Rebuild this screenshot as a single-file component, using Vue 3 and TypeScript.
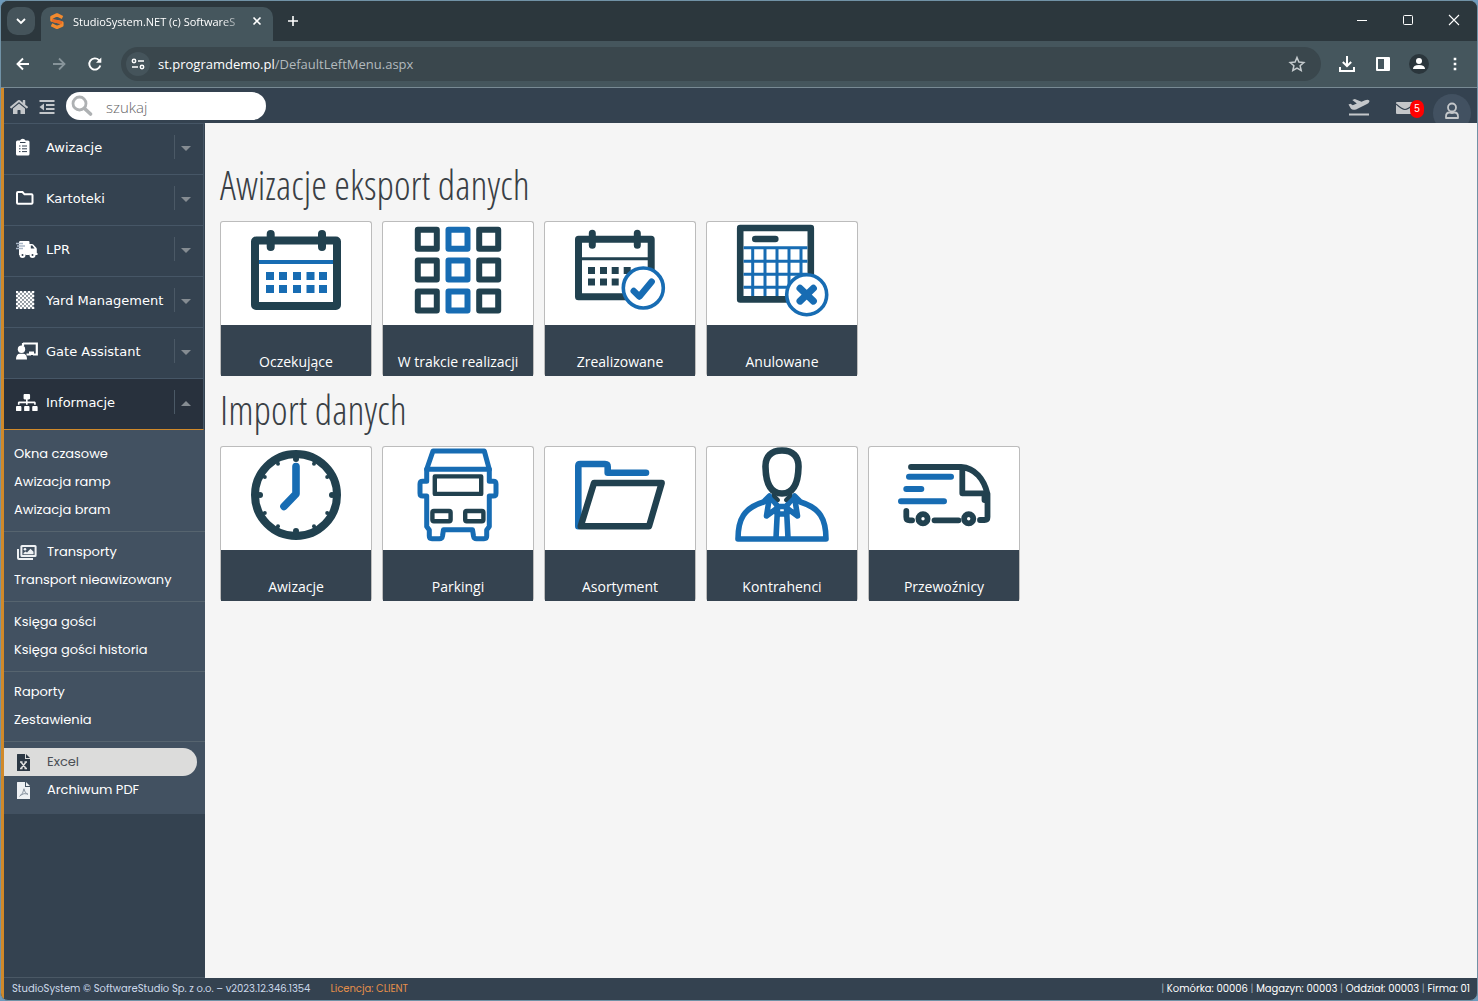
<script setup lang="ts">
import { ref } from 'vue'

interface Tile {
  label: string
  art: string
}
interface Section {
  title: string
  tiles: Tile[]
}
interface NavItem {
  label: string
  icon: string
}
interface SubItem {
  label: string
  icon?: string
  selected?: boolean
}

const dark = '#21414f'
const blue = '#176cb3'

const rects = (xs: number[], ys: number[], size: number, attrs: string): string =>
  ys.map((y) => xs.map((x) => `<rect x="${x}" y="${y}" width="${size}" height="${size}" ${attrs}/>`).join('')).join('')

const clockTicks = Array.from({ length: 12 }, (_, i) => {
  const a = (i * Math.PI) / 6
  const r = i % 3 === 0 ? 3 : 2
  return `<circle cx="${(75 + 36 * Math.sin(a)).toFixed(1)}" cy="${(48 - 36 * Math.cos(a)).toFixed(1)}" r="${r}" fill="${dark}"/>`
}).join('')

const round = 'fill="none" stroke-linecap="round" stroke-linejoin="round"'

const art = {
  calendar: `<rect x="34" y="18.5" width="82" height="65.5" rx="1" fill="none" stroke="${dark}" stroke-width="8" stroke-linejoin="round"/>
    <path d="M49.7 12v13M101 12v13" ${round} stroke="${dark}" stroke-width="8"/>
    <path d="M38 40h74" stroke="${blue}" stroke-width="4"/>${rects([45, 58, 72, 85.5, 98], [50, 63], 8, `fill="${blue}"`)}`,
  grid:
    rects([34.8, 96.2], [7.8, 38.5, 69.5], 19, `fill="none" stroke="${dark}" stroke-width="6" stroke-linejoin="round"`) +
    rects([65.5], [7.8, 38.5, 69.5], 19, `fill="none" stroke="${blue}" stroke-width="6" stroke-linejoin="round"`),
  done: `<rect x="33.5" y="17.2" width="72.7" height="57.6" fill="none" stroke="${dark}" stroke-width="7" stroke-linejoin="round"/>
    <path d="M47.3 11.3v12M92.3 11.3v12" ${round} stroke="${dark}" stroke-width="7"/>
    <path d="M36 36.7h68" stroke="${dark}" stroke-width="3"/>${rects([43, 55, 66.7, 78.7], [45, 56.5], 7, `fill="${dark}"`)}
    <circle cx="98.3" cy="66" r="20" fill="#fff" stroke="${blue}" stroke-width="3.6"/>
    <path d="M88.7 69l5.6 5.6 12.4-15" ${round} stroke="${blue}" stroke-width="6.4"/>`,
  cancelled: `<rect x="33.2" y="6" width="70.6" height="71.4" fill="none" stroke="${dark}" stroke-width="6.6" stroke-linejoin="round"/>
    <path d="M48.3 17h20" ${round} stroke="${dark}" stroke-width="6.6"/>
    <path d="M36.5 25.7h64M36.5 39.3h64M36.5 52.3h64M36.5 65.3h64M45.7 25v49M58 25v49M70 25v49M82 25v49M94 25v49" stroke="${blue}" stroke-width="3"/>
    <circle cx="99.7" cy="72.7" r="20" fill="#fff" stroke="${blue}" stroke-width="3.6"/>
    <path d="M93 66.3l13.4 12.8M106.4 66.3L93 79.1" ${round} stroke="${blue}" stroke-width="7"/>`,
  clock: `<circle cx="75" cy="48" r="41" fill="none" stroke="${dark}" stroke-width="8"/>${clockTicks}
    <path d="M75 19.6v27.2L63 59.4" ${round} stroke="${blue}" stroke-width="7.6"/>`,
  truck: `<path d="M50 4h51.3l5 18.3H43.7z" ${round} stroke="${blue}" stroke-width="5"/>
    <path d="M43.7 22.3v12h-4q-2.7 0-2.7 2.7v9.2q0 2.8 2.7 2.8h4v30.5l2.6 3.5v6q0 2.7 2.7 2.7h7.5q2.5 0 3-2.7l1-6.3h29l1 6.3q.5 2.7 3 2.7h7.5q2.7 0 2.7-2.7v-6l2.6-3.5V49h4q2.7 0 2.7-2.8V37q0-2.7-2.7-2.7h-4v-12" ${round} stroke="${blue}" stroke-width="5"/>
    <rect x="51.8" y="29.4" width="46.4" height="17.5" fill="none" stroke="${dark}" stroke-width="4.4" stroke-linejoin="round"/>
    <rect x="49.4" y="64" width="18.2" height="10.2" rx="1.5" fill="none" stroke="${dark}" stroke-width="4.4"/>
    <rect x="82.2" y="64" width="18.2" height="10.2" rx="1.5" fill="none" stroke="${dark}" stroke-width="4.4"/>`,
  folder: `<path d="M33.3 79.3V19q0-2 2-2H60q2.7 0 2.7 2.7v6H101" ${round} stroke="${blue}" stroke-width="6.6"/>
    <path d="M49 36h67.7L104 79.3H35.7z" fill="#fff" stroke="${dark}" stroke-width="6.4" stroke-linejoin="round"/>`,
  person: `<path d="M31 92c0-20 6-31 25.500-37l6-6 8 10M119 92c0-20-6-31-25.500-37l-6-6-8 10M31 92h88M62.500 50l-3 19 9.500-7M87.500 50l3 19-9.500-7M70.500 61.500L69 91M79.500 61.500L81 91M70 59.500h10v7.500h-10z" ${round} stroke="${blue}" stroke-width="5.600"/>
    <path d="M67 44v5l4 4M83 44v5l-4 4" ${round} stroke="${dark}" stroke-width="4"/>
    <path d="M75 3.500C64 3.500 58.200 9.500 58.500 20C58.800 37 64 46.500 75 46.500S91.200 37 91.500 20C91.800 9.500 86 3.500 75 3.500z" fill="#fff" stroke="${dark}" stroke-width="6.600"/>`,
  van: `<path d="M42 20h50c14 1 23 12 26.500 27v23q0 3-3 3h-4.500M93.300 22v24.300H117M115.500 50v3M37.300 64v6q0 3.300 3.300 3.300h2.500M65.500 73.300h24" ${round} stroke="${dark}" stroke-width="5.800"/>
    <circle cx="54" cy="71.700" r="4.600" fill="none" stroke="${dark}" stroke-width="5.800"/>
    <circle cx="99.700" cy="71.700" r="4.600" fill="none" stroke="${dark}" stroke-width="5.800"/>
    <path d="M40 29.700h42M37.300 42h15M32 54.300h43" ${round} stroke="${blue}" stroke-width="6"/>`,
}

const sections: Section[] = [
  {
    title: 'Awizacje eksport danych',
    tiles: [
      { label: 'Oczekujące', art: art.calendar },
      { label: 'W trakcie realizacji', art: art.grid },
      { label: 'Zrealizowane', art: art.done },
      { label: 'Anulowane', art: art.cancelled },
    ],
  },
  {
    title: 'Import danych',
    tiles: [
      { label: 'Awizacje', art: art.clock },
      { label: 'Parkingi', art: art.truck },
      { label: 'Asortyment', art: art.folder },
      { label: 'Kontrahenci', art: art.person },
      { label: 'Przewoźnicy', art: art.van },
    ],
  },
]

const checker = Array.from({ length: 9 }, (_, r) =>
  Array.from({ length: 9 }, (_, c) => ((r + c) % 2 ? '' : `<circle cx="${c * 2 + 1}" cy="${r * 2 + 1}" r="1.4"/>`)).join(''),
).join('')

const icon = {
  clipboard: `<path d="M1.500 2.500h2.500a3 2.800 0 0 1 5.500 0H12a1.500 1.500 0 0 1 1.500 1.500v12A1.500 1.500 0 0 1 12 17.500H1.500A1.500 1.500 0 0 1 0 16V4A1.500 1.500 0 0 1 1.500 2.500z"/><path d="M3 8h1.500M3 10.800h1.500M3 13.600h1.500M6 8h5M6 10.800h5M6 13.600h5M4 4.500h5.500" stroke="#344250" stroke-width="1"/>`,
  folder: `<path d="M2 3h4.500l2 2.300h7q1 0 1 1v7.400q0 1-1 1H2q-1 0-1-1V4q0-1 1-1z" fill="none" stroke="#fff" stroke-width="2"/>`,
  truck: `<path d="M4 1h8.500q1 0 1 1v2h2.500q.8 0 1.300.6l3 3.200q.5.600.5 1.300v4h.700v1.800H19a2.900 2.900 0 0 0-5.500 0h-3.800a2.900 2.900 0 0 0-5.500 0H3V1.800z"/><path d="M0 3.500h7M1 6h8M0 8.500h7" stroke="#aab8c8" stroke-width="1.300"/><circle cx="6.500" cy="15" r="2" fill="none" stroke="#fff" stroke-width="2"/><circle cx="16.500" cy="15" r="2" fill="none" stroke="#fff" stroke-width="2"/><path d="M14.800 5.600h1.500l2.300 2.800h-3.800z" fill="#344250"/>`,
  checker,
  assistant: `<path d="M7 1.500h13.800v11H17M7 1v3M10.500 12.500H15" fill="none" stroke="#fff" stroke-width="2.200"/><path d="M13 9.500h5V13h-5z"/><circle cx="5.500" cy="7.300" r="3.700"/><path d="M0 17.500q0-5.800 4-5.800h3q4 0 4 5.800z"/>`,
  sitemap: `<path transform="translate(0 1) scale(.0338)" d="M128 352H32c-17.670 0-32 14.330-32 32v96c0 17.670 14.330 32 32 32h96c17.670 0 32-14.330 32-32v-96c0-17.670-14.330-32-32-32zm-24-80h192v48h48v-48h192v48h48v-57.590c0-21.170-17.230-38.410-38.410-38.410H344v-64h40c17.670 0 32-14.330 32-32V32c0-17.670-14.330-32-32-32H256c-17.670 0-32 14.330-32 32v96c0 17.670 14.330 32 32 32h40v64H94.410C73.230 224 56 241.230 56 262.410V320h48v-48zm264 80h-96c-17.670 0-32 14.330-32 32v96c0 17.670 14.330 32 32 32h96c17.670 0 32-14.330 32-32v-96c0-17.670-14.330-32-32-32zm240 0h-96c-17.670 0-32 14.330-32 32v96c0 17.670 14.330 32 32 32h96c17.670 0 32-14.330 32-32v-96c0-17.670-14.330-32-32-32z"/>`,
  images: `<path d="M5 2h13q.6 0 .6.600v8.900q0 .6-.6.600H5q-.6 0-.6-.6V2.600q0-.6.600-.6zM1 5v9q0 1 1 1h14" fill="none" stroke="#eef1f4" stroke-width="2"/><circle cx="8" cy="5.200" r="1.300"/><path d="M6.500 10.300V9l2-1.500 1.500 1 3.500-3.700 3 3v2.500z"/>`,
  excel: `<path d="M.5 0H8v5h5v11.500q0 .5-.5.500H.5q-.5 0-.5-.5V.5Q0 0 .5 0zM9 0l4 4H9z"/><path d="M4 8l5 6.500M9 8l-5 6.500M3 8h2.500M7.500 8H10M3 14.500h2.500M7.500 14.500H10" stroke="#ddd" stroke-width="1.500"/>`,
  pdf: `<path d="M.5 0H8v5h5v11.500q0 .5-.5.500H.5q-.5 0-.5-.5V.5Q0 0 .5 0zM9 0l4 4H9z"/><path d="M2.500 14.500q4-3 4.500-8M3 13.500q4-3 8-1.500M7 7q.5 4 4 5.500" fill="none" stroke="#8c97a3" stroke-width="1"/>`,
}

const nav: NavItem[] = [
  { label: 'Awizacje', icon: icon.clipboard },
  { label: 'Kartoteki', icon: icon.folder },
  { label: 'LPR', icon: icon.truck },
  { label: 'Yard Management', icon: icon.checker },
  { label: 'Gate Assistant', icon: icon.assistant },
  { label: 'Informacje', icon: icon.sitemap },
]
const open = ref('Informacje')

const groups: SubItem[][] = [
  [{ label: 'Okna czasowe' }, { label: 'Awizacja ramp' }, { label: 'Awizacja bram' }],
  [{ label: 'Transporty', icon: icon.images }, { label: 'Transport nieawizowany' }],
  [{ label: 'Księga gości' }, { label: 'Księga gości historia' }],
  [{ label: 'Raporty' }, { label: 'Zestawienia' }],
  [{ label: 'Excel', icon: icon.excel, selected: true }, { label: 'Archiwum PDF', icon: icon.pdf }],
]
</script>

<template>
  <div class="window">
    <div class="tabstrip">
      <button class="tab-search" aria-label="Szukaj kart">
        <svg width="12" height="12" viewBox="0 0 12 12"><path d="M2 4l4 4 4-4" fill="none" stroke="#fff" stroke-width="1.800" /></svg>
      </button>
      <div class="tab">
        <svg class="favicon" width="14" height="16" viewBox="0 0 14 16">
          <path d="M12.500 4.500L7 1.800 1.800 4.300v3L12 9.700v2.600L7 14.500l-5.500-2.800" fill="none" stroke="#f28a2e" stroke-width="3.200" stroke-linejoin="round" />
          <path d="M2 7.300L12 9.700" stroke="#e96a24" stroke-width="3" />
        </svg>
        <span class="tab-title">StudioSystem.NET (c) SoftwareS</span>
        <button class="plain" aria-label="Zamknij kartę">
          <svg width="16" height="16" viewBox="0 0 16 16"><path d="M4.500 4.500l7 7M11.500 4.500l-7 7" stroke="#fff" stroke-width="1.600" /></svg>
        </button>
      </div>
      <button class="plain new-tab" aria-label="Nowa karta">
        <svg width="16" height="16" viewBox="0 0 16 16"><path d="M8 3v10M3 8h10" stroke="#fff" stroke-width="1.600" /></svg>
      </button>
      <div class="window-buttons">
        <button class="plain" aria-label="Minimalizuj"><svg width="12" height="12" viewBox="0 0 12 12"><path d="M1 6.500h10" stroke="#fff" /></svg></button>
        <button class="plain" aria-label="Maksymalizuj"><svg width="12" height="12" viewBox="0 0 12 12"><rect x="1.500" y="1.500" width="9" height="9" rx="1" fill="none" stroke="#fff" /></svg></button>
        <button class="plain" aria-label="Zamknij"><svg width="12" height="12" viewBox="0 0 12 12"><path d="M1 1l10 10M11 1L1 11" stroke="#fff" stroke-width="1.100" /></svg></button>
      </div>
    </div>

    <div class="toolbar">
      <button class="plain tool" aria-label="Wstecz"><svg width="16" height="16" viewBox="0 0 16 16"><path d="M14 8H3M8 2.500L2.500 8 8 13.500" fill="none" stroke="#fff" stroke-width="1.900" /></svg></button>
      <button class="plain tool" aria-label="Dalej"><svg width="16" height="16" viewBox="0 0 16 16"><path d="M2 8h11M8 2.500L13.500 8 8 13.500" fill="none" stroke="#87949a" stroke-width="1.800" /></svg></button>
      <button class="plain tool" aria-label="Odśwież"><svg width="16" height="16" viewBox="0 0 16 16"><path d="M13.300 9.500A5.600 5.600 0 1 1 12 4.200l1.300 1.400" fill="none" stroke="#fff" stroke-width="1.900" /><path d="M14.300 1.500v5.300H9z" fill="#fff" /></svg></button>
      <div class="address">
        <span class="site-info">
          <svg width="14" height="14" viewBox="0 0 14 14"><path d="M7 4h6M1 10h6" stroke="#fff" stroke-width="1.600" /><circle cx="3" cy="4" r="1.700" fill="none" stroke="#fff" stroke-width="1.500" /><circle cx="11" cy="10" r="1.700" fill="none" stroke="#fff" stroke-width="1.500" /></svg>
        </span>
        <span class="url"><b>st.programdemo.pl</b>/DefaultLeftMenu.aspx</span>
        <button class="plain" aria-label="Dodaj do zakładek"><svg width="18" height="18" viewBox="0 0 18 18"><path d="M9 2.500l1.900 4.600 4.900.4-3.700 3.200 1.100 4.800L9 13l-4.200 2.500 1.100-4.800-3.700-3.200 4.900-.4z" fill="none" stroke="#c5cbce" stroke-width="1.500" /></svg></button>
      </div>
      <button class="plain tool" aria-label="Pobrane"><svg width="18" height="18" viewBox="0 0 18 18"><path d="M9 1v9.500M4.800 7L9 11l4.200-4M2 12v4h14v-4" fill="none" stroke="#fff" stroke-width="2" /></svg></button>
      <button class="plain tool" aria-label="Panel boczny"><svg width="16" height="16" viewBox="0 0 16 16"><path d="M2 1h12a1 1 0 0 1 1 1v12a1 1 0 0 1-1 1H2a1 1 0 0 1-1-1V2a1 1 0 0 1 1-1zM3 3v10h6V3z" fill="#fff" fill-rule="evenodd" /></svg></button>
      <button class="plain tool" aria-label="Profil"><svg width="20" height="20" viewBox="0 0 20 20"><circle cx="10" cy="10" r="10" fill="#2b363c" /><circle cx="10" cy="7" r="3" fill="#fff" /><path d="M4 15q0-4 6-4t6 4z" fill="#fff" /></svg></button>
      <button class="plain tool" aria-label="Menu"><svg width="16" height="16" viewBox="0 0 16 16"><path d="M6.700 1.700h2.600v2.600H6.700zM6.700 6.700h2.600v2.600H6.700zM6.700 11.700h2.600v2.600H6.700z" fill="#fff" /></svg></button>
    </div>

    <div class="app">
      <header class="topbar">
        <a href="#" class="home" aria-label="Start">
          <svg width="18" height="16" viewBox="0 0 576 512"><path fill="#c4c7ca" d="M280.370 148.260L96 300.110V464a16 16 0 0 0 16 16l112.060-.29a16 16 0 0 0 15.920-16V368a16 16 0 0 1 16-16h64a16 16 0 0 1 16 16v95.640a16 16 0 0 0 16 16.050L464 480a16 16 0 0 0 16-16V300L295.670 148.260a12.190 12.190 0 0 0-15.300 0zM571.600 251.470L488 182.560V44.050a12 12 0 0 0-12-12h-56a12 12 0 0 0-12 12v72.610L318.470 43a48 48 0 0 0-61 0L4.340 251.470a12 12 0 0 0-1.600 16.900l25.500 31A12 12 0 0 0 45.150 301l235.220-193.740a12.190 12.190 0 0 1 15.300 0L530.900 301a12 12 0 0 0 16.900-1.600l25.500-31a12 12 0 0 0-1.700-16.930z" /></svg>
        </a>
        <button class="plain collapse" aria-label="Zwiń menu">
          <svg width="16" height="16" viewBox="0 0 16 16"><path d="M.5 2h15M7 6h8.500M7 10h8.500M.5 14h15" stroke="#c4c7ca" stroke-width="2" /><path d="M5 4.500v7L.5 8z" fill="#c4c7ca" /></svg>
        </button>
        <label class="search">
          <svg width="22" height="22" viewBox="0 0 22 22"><circle cx="8.500" cy="8.500" r="6.500" fill="none" stroke="#aeb1b3" stroke-width="2.800" /><path d="M13.500 13.500l6 5.500" stroke="#aeb1b3" stroke-width="3.600" stroke-linecap="round" /></svg>
          <input type="text" placeholder="szukaj" aria-label="szukaj" />
        </label>
        <div class="status">
          <a href="#" aria-label="Odloty"><svg width="22" height="18" viewBox="0 0 22 18"><path d="M1 16.500h20" stroke="#c4c7ca" stroke-width="1.800" /><path d="M.5 6.500l2-.7 2.300 1.400 4-1.700L4.300 2l2.500-1 6.700 2.700 3.500-1.500q3-1.200 4.300.3.700 1.800-2.300 3.500L8 11.500q-3.500 1-5-.8z" fill="#c4c7ca" /></svg></a>
          <a href="#" class="mail" aria-label="Wiadomości">
            <svg width="18" height="14" viewBox="0 0 18 14"><rect y="1" width="18" height="12" rx="1" fill="#c4c7ca" /><path d="M0 3q6 5.500 9 5.500T18 3" fill="none" stroke="#344250" stroke-width="1.200" /></svg>
            <span class="badge">5</span>
          </a>
          <a href="#" class="user" aria-label="Użytkownik"><svg width="16" height="18" viewBox="0 0 16 18"><circle cx="8" cy="5.500" r="4" fill="none" stroke="#c4c7ca" stroke-width="1.800" /><path d="M2 16v-1.500q0-4 3.500-4 2.500 1 5 0 3.500 0 3.500 4V16z" fill="none" stroke="#c4c7ca" stroke-width="1.800" stroke-linejoin="round" /></svg></a>
        </div>
      </header>

      <div class="body">
        <aside class="sidebar">
          <nav>
            <button v-for="item in nav" :key="item.label" class="nav-item" :class="{ active: open === item.label }" @click="open = item.label">
              <svg class="nav-icon" width="22" height="18" viewBox="0 0 22 18" fill="#fff" v-html="item.icon" />
              <span class="nav-label">{{ item.label }}</span>
              <span class="nav-arrow"><svg width="10" height="5" viewBox="0 0 10 5"><path :d="open === item.label ? 'M0 5l5-5 5 5z' : 'M0 0h10L5 5z'" fill="#858c92" /></svg></span>
            </button>
            <div class="submenu">
              <div v-for="(group, i) in groups" :key="i" class="group">
                <a v-for="sub in group" :key="sub.label" href="#" :class="{ selected: sub.selected }">
                  <svg v-if="sub.icon" width="20" height="17" viewBox="0 0 20 17" :fill="sub.selected ? '#2b3743' : '#eef1f4'" v-html="sub.icon" />
                  <span>{{ sub.label }}</span>
                </a>
              </div>
            </div>
          </nav>
        </aside>

        <main>
          <section v-for="section in sections" :key="section.title">
            <h1>{{ section.title }}</h1>
            <div class="tiles">
              <a v-for="tile in section.tiles" :key="tile.label" href="#" class="tile">
                <svg width="150" height="103" viewBox="0 0 150 103" v-html="tile.art" />
                <span>{{ tile.label }}</span>
              </a>
            </div>
          </section>
        </main>
      </div>

      <footer>
        <span>StudioSystem © SoftwareStudio Sp. z o.o. – v2023.12.346.1354</span>
        <a href="#" class="licence">Licencja: CLIENT</a>
        <span class="context"><i>|</i> Komórka: 00006 <i>|</i> Magazyn: 00003 <i>|</i> Oddział: 00003 <i>|</i> Firma: 01</span>
      </footer>
    </div>
  </div>
</template>

<style>
body {
  background: #6e9bbd;
}
</style>

<style scoped>
* {
  box-sizing: border-box;
}
.window {
  display: flex;
  flex-direction: column;
  height: 100vh;
  overflow: hidden;
  border: 1px solid #7192a6;
  border-radius: 8px;
  background: #344250;
  font-family: "Open Sans", "Noto Sans", sans-serif;
}
svg {
  display: block;
  flex: none;
}
a {
  text-decoration: none;
}
button {
  border: 0;
  font: inherit;
}
.plain {
  padding: 0;
  background: none;
}
.tabstrip {
  display: flex;
  align-items: center;
  height: 40px;
  padding: 6px 16px 0 6px;
  background: #2c373d;
}
.tab-search {
  display: flex;
  align-items: center;
  justify-content: center;
  width: 28px;
  height: 28px;
  margin: 0 6px 6px 0;
  padding: 0;
  border-radius: 10px;
  background: #45545b;
}
.tab {
  display: flex;
  align-items: center;
  width: 232px;
  height: 34px;
  padding: 0 8px 6px 9px;
  border-radius: 10px 10px 0 0;
  background: #45565d;
}
.tab-title {
  flex: 1;
  margin-left: 9px;
  color: #fff;
  font-size: 11px;
  white-space: nowrap;
  mask-image: linear-gradient(to right, #000 84%, rgba(0, 0, 0, 0.2) 96%);
}
.new-tab {
  margin: 0 0 6px 12px;
}
.window-buttons {
  display: flex;
  gap: 34px;
  margin: 0 1px 8px auto;
}
.toolbar {
  display: flex;
  align-items: center;
  height: 47px;
  padding: 0 4px;
  border-bottom: 1px solid #788a94;
  background: #45565d;
}
.tool {
  display: flex;
  justify-content: center;
  width: 36px;
}
.address {
  display: flex;
  flex: 1;
  align-items: center;
  height: 34px;
  margin: 0 8px;
  padding: 0 15px 0 5px;
  border-radius: 17px;
  background: #3a474d;
}
.site-info {
  display: flex;
  align-items: center;
  justify-content: center;
  width: 24px;
  height: 24px;
  border-radius: 12px;
  background: #45545b;
}
.url {
  flex: 1;
  margin-left: 8px;
  color: #b3babd;
  font-size: 13px;
}
.url b {
  color: #fff;
  font-weight: 400;
}
.app {
  display: flex;
  flex: 1;
  flex-direction: column;
  min-height: 0;
  border-left: 3px solid #d0892a;
}
.topbar {
  display: flex;
  align-items: center;
  height: 35px;
  padding: 0 6px 0 6px;
  overflow: hidden;
}
.home {
  margin: 2px 11px 0 0;
}
.collapse {
  margin: 2px 11px 0 0;
}
.search {
  display: flex;
  align-items: center;
  width: 200px;
  height: 28px;
  padding-left: 5px;
  border-radius: 14px;
  background: #fff;
}
.search input {
  width: 150px;
  margin-left: 13px;
  padding: 2px 0 0;
  border: 0;
  outline: 0;
  background: none;
  color: #555;
  font: 300 15px "Open Sans", sans-serif;
}
.search input::placeholder {
  color: #666;
}
.status {
  display: flex;
  align-items: center;
  margin-left: auto;
  padding-top: 2px;
}
.mail {
  display: flex;
  align-items: center;
  margin: 2px 9px 0 26px;
}
.badge {
  width: 14px;
  margin: 2px 0 0 -4px;
  border-radius: 8px;
  background: #f00;
  color: #fff;
  font: 10px/18px "Liberation Sans", sans-serif;
  text-align: center;
}
.user {
  display: flex;
  align-items: center;
  justify-content: center;
  width: 38px;
  height: 38px;
  margin-top: 12px;
  padding-bottom: 4px;
  border-radius: 19px;
  background: #425161;
}
.body {
  display: flex;
  flex: 1;
  min-height: 0;
}
.sidebar {
  flex: none;
  width: 201px;
  border-top: 1px solid #465666;
  border-bottom: 1px solid #4a5865;
}
.nav-item {
  display: flex;
  align-items: center;
  width: 200px;
  height: 51px;
  padding: 0 0 4px 12px;
  border-right: 1px solid #465666;
  border-bottom: 1px solid #465666;
  background: #344250;
  color: #fff;
  text-align: left;
}
.nav-item.active {
  border-bottom: 1px solid #d0892a;
  background: #28313d;
}
.nav-label {
  flex: 1;
  margin-left: 8px;
  font: 500 13px Verdana, "DejaVu Sans", sans-serif;
  white-space: nowrap;
}
.nav-arrow {
  display: flex;
  align-items: center;
  height: 24px;
  padding: 2px 12px 0 6px;
  border-left: 1px solid #4b5966;
}
.submenu {
  padding: 3px 0 3px;
  background: #425161;
}
.group {
  padding: 6px 0 7px;
  border-top: 1px solid #56646f;
}
.group:first-child {
  border-top-color: transparent;
}
.group a {
  display: flex;
  align-items: center;
  width: 193px;
  height: 28px;
  padding-left: 10px;
  color: #fff;
  font: 400 13px Poppins, Inter, sans-serif;
}
.group svg {
  margin: 0 10px 0 3px;
}
.group .selected {
  border-radius: 0 14px 14px 0;
  background: #dcdcdb;
  color: #4a4f55;
}
main {
  flex: 1;
  min-width: 0;
  padding: 28px 15px;
  overflow: auto;
  background: #f5f5f5;
}
h1 {
  margin: 0;
  padding-bottom: 2px;
  color: #3a3f45;
  font: 300 40px/68px "Open Sans Condensed Light", "Open Sans Condensed", "Roboto Condensed", "Liberation Sans Narrow", "Open Sans", sans-serif;
}
.tiles {
  display: flex;
  flex-wrap: wrap;
  gap: 10px;
}
.tile {
  width: 152px;
  border: 1px solid #bcbcbc;
  border-bottom: 0;
  border-radius: 3px;
  background: #fff;
}
.tile span {
  display: block;
  height: 51px;
  padding-top: 27px;
  background: #354350;
  color: #fff;
  font-size: 14px;
  line-height: 20px;
  text-align: center;
}
footer {
  display: flex;
  align-items: center;
  height: 22px;
  padding: 0 7px 0 8px;
  color: #ccd9ea;
  font: 400 10px Poppins, Inter, sans-serif;
}
.licence {
  margin-left: 20px;
  color: #e58f4a;
}
.context {
  margin-left: auto;
  color: #fff;
}
.context i {
  color: #9aa5b0;
  font-style: normal;
}
</style>
